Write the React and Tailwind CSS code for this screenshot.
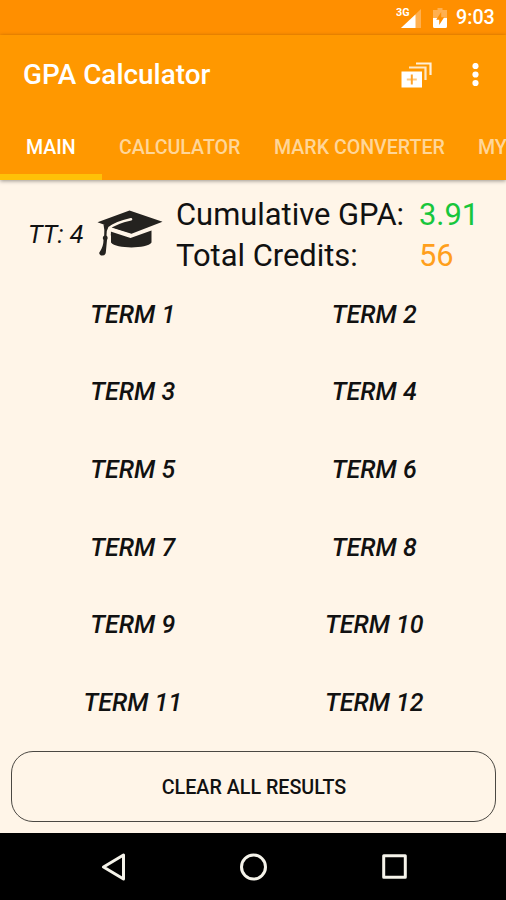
const tabs = [
  { label: 'MAIN', cls: 'w-[102px] pl-[26px] text-white' },
  { label: 'CALCULATOR', cls: 'w-[155px] pl-[17px] text-[#ffd699]' },
  { label: 'MARK CONVERTER', cls: 'w-[204px] pl-[17px] text-[#ffd699]' },
  { label: 'MY', cls: 'w-[45px] pl-[17px] text-[#ffd699]' },
];

function SignalIcon() {
  return (
    <svg className="h-[22px] w-[27px]" viewBox="0 0 27 22">
      <path d="M25 2V21H5Z" fill="#ffb050" />
      <path d="M19.500 7.500V21H5Z" fill="#fff" />
      <text x="0" y="9" fontSize="11" fontWeight="700" fontFamily="Roboto, sans-serif" fill="#fff" textLength="13.500" lengthAdjust="spacingAndGlyphs">3G</text>
    </svg>
  );
}

function BatteryIcon() {
  return (
    <svg className="h-[20px] w-[14px]" viewBox="0 0 14 20">
      <path d="M4.500 0h5v2H14v8H0V2h4.500Z" fill="#ffb050" />
      <path d="M0 10h14v8.500a1.500 1.500 0 0 1-1.500 1.500h-11A1.500 1.500 0 0 1 0 18.500Z" fill="#fff" />
      <path d="M8.200 4 3.200 11.800h3v5.200l5-7.800h-3Z" fill="#ff8f00" />
    </svg>
  );
}

function AddTermIcon() {
  return (
    <svg className="h-[26px] w-[31px]" viewBox="0 0 31 26">
      <path d="M15 1.500H29.500V13" fill="none" stroke="#fff0da" strokeWidth="2.200" />
      <path d="M8 5.500H24.500V18" fill="none" stroke="#ffe8c8" strokeWidth="2.200" />
      <rect x="0.500" y="9.500" width="20.500" height="16" fill="#fff" />
      <path d="M5.800 17.500h10" stroke="#ffc87d" strokeWidth="2" />
      <path d="M10.800 12.500v10" stroke="#ffa32b" strokeWidth="2" />
    </svg>
  );
}

function GradCap() {
  return (
    <svg className="h-[48px] w-[66px]" viewBox="0 0 66 48" fill="#24221f">
      <path d="M32.500 1.500 65.500 12.800 34.500 24.800 15 18.800 8 16 0.500 13.200Z" />
      <path d="M13.500 22.500 33.500 29 54.500 21.500V33.500C50 40 19 40 14 33.500V27.500Z" />
      <path d="M34 10.200Q18 13.800 12.500 19V24" fill="none" stroke="#fff5e8" strokeWidth="2.600" strokeLinecap="round" />
      <path d="M12.500 19.200 33.500 26.300" fill="none" stroke="#fff5e8" strokeWidth="2" />
      <path d="M6.500 15.500Q7.800 21 7.200 26.500 4.800 28.500 6.500 31 6.500 37 3 42.500 1 44.500 4 46.500 8.500 47 8.800 43.500L10 31Q11.500 28.500 9.500 26.500 9.500 21 11.500 17.800L15.500 14.500Z" />
    </svg>
  );
}

export default function App() {
  return (
    <div className="flex h-[900px] w-[506px] flex-col overflow-hidden bg-[#fff5e8] font-[Roboto,sans-serif] text-[#111]">
      <div className="flex h-[35px] shrink-0 items-center bg-[#ff8f00] pt-px pl-[396px]">
        <SignalIcon />
        <div className="ml-[10px]"><BatteryIcon /></div>
        <span className="ml-[9px] text-[19.700px] font-medium text-white">9:03</span>
      </div>
      <header className="z-10 h-[145px] shrink-0 bg-[#ff9800] shadow-[0_1px_4px_rgba(0,0,0,0.4)]">
        <div className="flex h-[79px] items-center">
          <h1 className="w-[401px] pt-px pl-[23px] text-[27.900px] leading-[36px] font-medium text-white">GPA Calculator</h1>
          <AddTermIcon />
          <svg className="ml-[40px] h-[24px] w-[7px]" viewBox="0 0 7 24" fill="#fff">
            <circle cx="3.500" cy="3" r="3.100" />
            <circle cx="3.500" cy="11.500" r="3.100" />
            <circle cx="3.500" cy="20" r="3.100" />
          </svg>
        </div>
        <nav className="flex h-[66px] overflow-hidden text-[19.600px] font-medium whitespace-nowrap">
          {tabs.map((t, i) => (
            <div key={t.label} className={`flex shrink-0 flex-col justify-between ${t.cls}`}>
              <span className="pt-[20px] leading-[28px]">{t.label}</span>
              {i === 0 && <div className="-ml-[26px] h-[6px] bg-[#ffc107]" />}
            </div>
          ))}
        </nav>
      </header>
      <section className="flex h-[95px] shrink-0 pl-[28px]">
        <span className="mt-[40px] w-[69px] text-[25.300px] leading-[30px] whitespace-nowrap italic">TT: 4</span>
        <div className="mt-[29px]"><GradCap /></div>
        <div className="mt-[14px] ml-[13px] grid grid-cols-[243px_auto] content-start text-[30.900px] leading-[41px] whitespace-nowrap">
          <span>Cumulative GPA:</span>
          <span className="text-[#18c63c]">3.91</span>
          <span>Total Credits:</span>
          <span className="text-[#ff9f1c]">56</span>
        </div>
      </section>
      <main className="grid h-[466px] shrink-0 grid-cols-2 grid-rows-6 pr-[11px] pl-[12px]">
        {Array.from({ length: 12 }, (_, i) => (
          <button key={i} className="pt-px text-[25px] font-medium italic">TERM {i + 1}</button>
        ))}
      </main>
      <div className="h-[92px] shrink-0 pt-[10px] pr-[10px] pl-[11px]">
        <button className="h-[71px] w-full rounded-[22px] border-[1.500px] border-[#4b4843] pt-[2px] pl-px text-[19.700px] font-medium">CLEAR ALL RESULTS</button>
      </div>
      <footer className="flex min-h-0 flex-1 items-center bg-black pl-[101px]">
        <svg className="h-[28px] w-[25px]" viewBox="0 0 25 28" fill="none" stroke="#f5f3ea" strokeWidth="3" strokeLinejoin="round">
          <path d="M22.500 2V26L2.500 14Z" />
        </svg>
        <svg className="ml-[114px] h-[28px] w-[28px]" viewBox="0 0 28 28" fill="none" stroke="#f5f3ea" strokeWidth="3">
          <circle cx="13.500" cy="14" r="12" />
        </svg>
        <svg className="ml-[114px] h-[25px] w-[25px]" viewBox="0 0 25 25" fill="none" stroke="#f5f3ea" strokeWidth="3" strokeLinejoin="round">
          <rect x="1.700" y="1.700" width="21.600" height="21.600" />
        </svg>
      </footer>
    </div>
  );
}
